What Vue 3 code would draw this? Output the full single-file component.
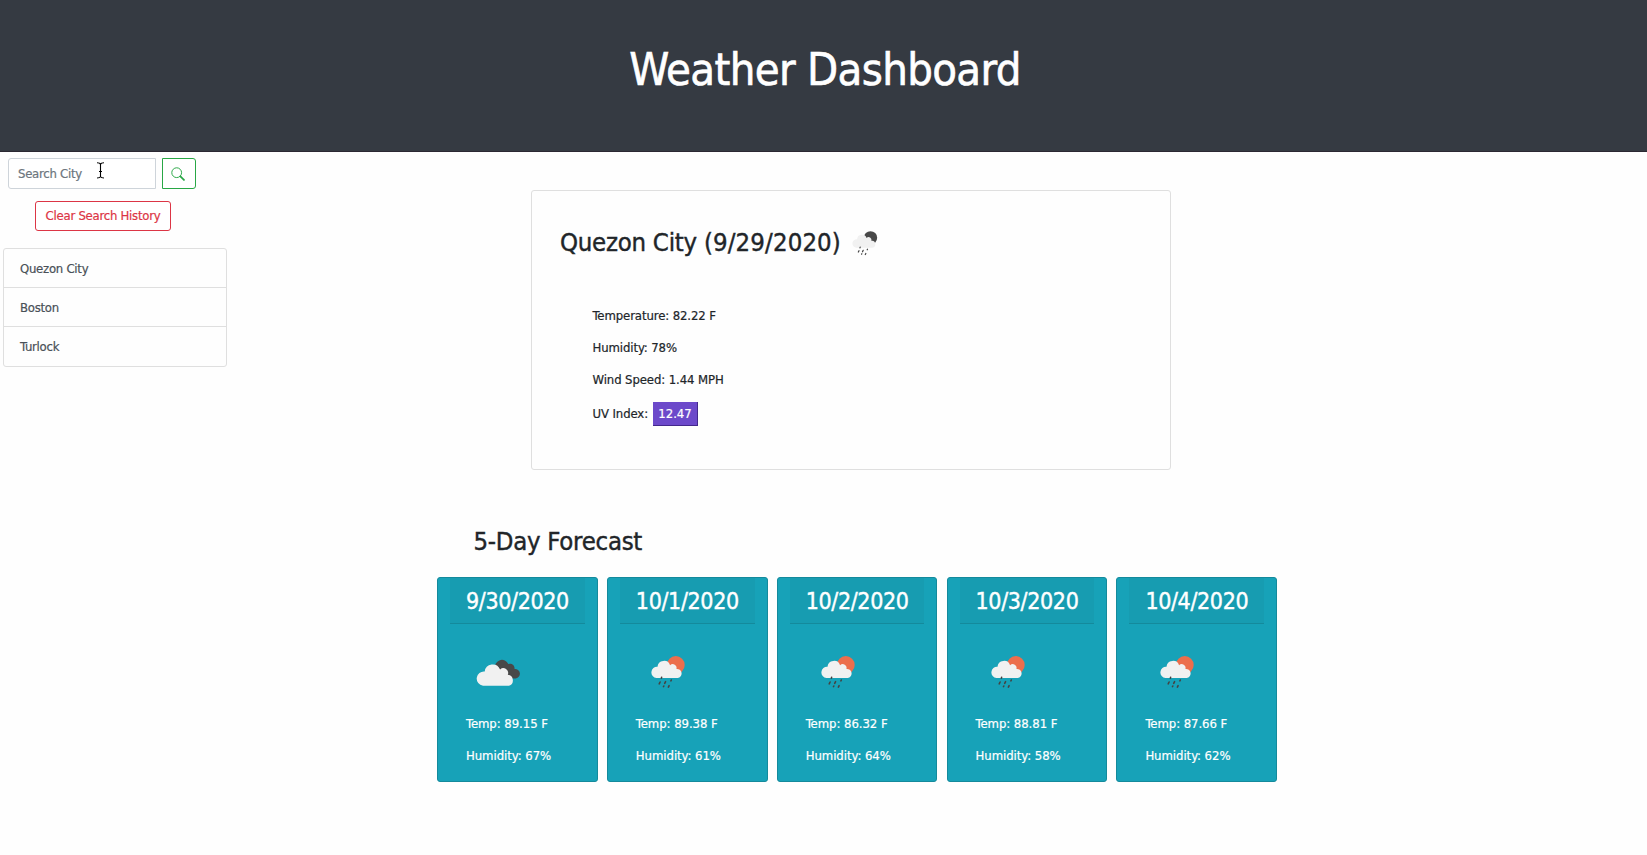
<script setup>
const history = ['Quezon City', 'Boston', 'Turlock']
const conditions = ['Temperature: 82.22 F', 'Humidity: 78%', 'Wind Speed: 1.44 MPH']
const forecast = [
  { date: '9/30/2020', icon: 'clouds', temp: '89.15', humidity: 67 },
  { date: '10/1/2020', icon: 'rain', temp: '89.38', humidity: 61 },
  { date: '10/2/2020', icon: 'rain', temp: '86.32', humidity: 64 },
  { date: '10/3/2020', icon: 'rain', temp: '88.81', humidity: 58 },
  { date: '10/4/2020', icon: 'rain', temp: '87.66', humidity: 62 },
]
</script>

<template>
  <div class="page">
    <header class="banner"><h1>Weather Dashboard</h1></header>
    <div class="body">
      <aside class="sidebar">
        <form class="search" @submit.prevent>
          <div class="field">Search City</div>
          <button class="go" type="button" aria-label="Search">
            <svg width="14" height="14" viewBox="0 0 16 16" fill="none" stroke="#28a745">
              <circle cx="6.5" cy="6.5" r="5.6" stroke-width="1.1" />
              <path d="M10.7 10.7 L14.8 14.8" stroke-width="2" stroke-linecap="round" />
            </svg>
          </button>
          <svg class="cursor" width="9" height="17" viewBox="0 0 9 17" fill="none" stroke="#000" stroke-width="1.1">
            <path d="M1 .8 Q4 .8 4.5 2.4 Q5 .8 8 .8 M4.5 2 V15 M1 16 Q4 16 4.5 14.6 Q5 16 8 16 M3 9.5 H6" />
          </svg>
        </form>
        <button class="clear" type="button">Clear Search History</button>
        <ul class="history">
          <li v-for="c in history" :key="c">{{ c }}</li>
        </ul>
      </aside>
      <main class="main">
        <section class="current">
          <h3>
            <span>Quezon City <span class="when">(9/29/2020)</span></span>
            <svg class="now" width="26" height="25" viewBox="0 0 34 33">
              <circle cx="24.3" cy="9" r="8.8" fill="#484848" />
              <path class="cloud" d="M5.5 22 a5.6 5.6 0 0 1 1-11.2 a6.5 6.5 0 0 1 12.6-1.6 a3.8 3.8 0 0 1 6.3 3.8 a4.5 4.5 0 0 1 1.3 9 z" />
              <path class="drops" d="M10.6 21.3l-.2.9M9.1 26l-.9 1.8M14.6 25.6l-.9 1.8M20.3 24l-.4.8M12.8 30l-.3.6M18.1 29.6l-.7 1.5" />
            </svg>
          </h3>
          <p v-for="c in conditions" :key="c">{{ c }}</p>
          <p class="uv"><span>UV Index:</span><span class="badge">12.47</span></p>
        </section>
        <h3 class="title">5-Day Forecast</h3>
        <section class="cards">
          <article v-for="d in forecast" :key="d.date" class="card">
            <div class="date">{{ d.date }}</div>
            <div class="picture">
              <svg v-if="d.icon === 'clouds'" class="overcast" width="46" height="28" viewBox="0 0 46 28">
                <path d="M19 10 a7 7 0 0 1 13.3-4 a4.6 4.6 0 0 1 6.2 5 a4.7 4.7 0 0 1 1.3 9.4 H28 z" fill="#484848" />
                <path class="cloud" d="M7 27.7 a6.9 6.9 0 0 1 1.7-14.2 a8 8 0 0 1 15.4-2 a4.8 4.8 0 0 1 7.7 5.3 a5.6 5.6 0 0 1 1.2 10.9 z" />
              </svg>
              <svg v-else class="rain" width="34" height="33" viewBox="0 0 34 33">
                <circle cx="24.8" cy="9" r="8.9" fill="#ec6e4c" />
                <path class="cloud" d="M5.5 22 a5.6 5.6 0 0 1 1-11.2 a6.5 6.5 0 0 1 12.6-1.6 a3.8 3.8 0 0 1 6.3 3.8 a4.5 4.5 0 0 1 1.3 9 z" />
                <path class="drops" d="M10.6 21.3l-.2.9M9.1 26l-.9 1.8M14.6 25.6l-.9 1.8M20.3 24l-.4.8M12.8 30l-.3.6M18.1 29.6l-.7 1.5" />
              </svg>
            </div>
            <p>Temp: {{ d.temp }} F</p>
            <p>Humidity: {{ d.humidity }}%</p>
          </article>
        </section>
      </main>
    </div>
  </div>
</template>

<style>
body { background: #fefefe; }
</style>

<style scoped>
* { box-sizing: border-box; }
.page { height: 855px; overflow: hidden; font-family: "DejaVu Sans Condensed", "DejaVu Sans", sans-serif; font-stretch: condensed; font-size: 13px; line-height: 20px; color: #212529; white-space: nowrap; -webkit-text-stroke: .2px currentColor; }
h1, h3, p, ul { margin: 0; padding: 0; font-weight: 400; }
.banner { height: 152px; padding: 43px 0 0 3px; background: #353a42; border-bottom: 1px solid #2b2832; text-align: center; color: #fff; }
h1 { font-size: 45px; line-height: 54px; letter-spacing: -.66px; -webkit-text-stroke: .6px currentColor; }
.body { display: flex; }
.sidebar { width: 230px; padding: 6px 0 0 3px; letter-spacing: -.26px; }
.search { position: relative; display: flex; gap: 6px; padding-left: 5px; }
.field { width: 148px; height: 31px; padding: 5px 9px; border: 1px solid #ced4da; border-radius: 3px 0 0 3px; color: #6c757d; background: #fff; }
.go { width: 34px; height: 31px; padding: 1px 2px 0 0; border: 1px solid #28a745; border-radius: 0 3px 3px 0; background: #fff; display: flex; align-items: center; justify-content: center; }
.cursor { position: absolute; left: 93px; top: 4px; }
.clear { display: block; width: 136px; height: 30px; margin: 12px 0 0 32px; padding: 0; border: 1px solid #dc3545; border-radius: 3px; background: #fff; color: #dc3545; font: inherit; line-height: 28px; letter-spacing: -.25px; }
.history { width: 224px; margin-top: 17px; border: 1px solid #dfdfdf; border-radius: 3px; list-style: none; color: #495057; }
.history li { height: 39px; padding: 10px 16px; border-bottom: 1px solid #dfdfdf; }
.history li:last-child { border-bottom: 0; }
.main { flex: 1; padding-left: 207px; }
.current { width: 640px; height: 280px; margin: 38px 0 0 94px; padding: 36px 0 0 28px; border: 1px solid #dfdfdf; border-radius: 3px; }
h3 { font-size: 25.5px; line-height: 31px; letter-spacing: -.25px; -webkit-text-stroke: .4px currentColor; }
.when { letter-spacing: .14px; }
.current h3 { display: flex; margin-bottom: 48px; }
.now { margin: 4px 0 0 11px; }
.current p { height: 32px; padding-left: 32.5px; letter-spacing: -.1px; }
.current .uv { display: flex; padding-top: 2px; }
.badge { height: 24px; width: 45px; margin: -2px 0 0 4.5px; padding-left: 1px; line-height: 23px; text-align: center; color: #fff; background: #6c49ca; border: solid #43288c; border-width: 0 1px 1px 0; letter-spacing: 0; }
.title { margin: 56px 0 0 36.5px; letter-spacing: -.27px; }
.cards { display: flex; gap: 9.1px; margin-top: 20px; }
.card { width: 160.75px; height: 205px; padding: 0 12px; border: 1px solid #148a9c; border-radius: 3px; background: #17a2b8; color: #fff; }
.date { height: 46px; padding: 8px 16px 0; font-size: 23px; line-height: 30px; letter-spacing: -.35px; background: #179cb1; border-bottom: 1px solid #148a9c; -webkit-text-stroke: .4px currentColor; }
.picture { height: 90px; padding: 32px 0 0 26px; }
.rain { display: block; margin-left: 5px; }
.overcast { display: block; margin-top: 2px; }
.card p { height: 32px; padding-left: 16px; letter-spacing: -.05px; }
.cloud { fill: #f1f1f1; }
.drops { fill: none; stroke: #444; stroke-width: 1.6; stroke-linecap: round; }
</style>
